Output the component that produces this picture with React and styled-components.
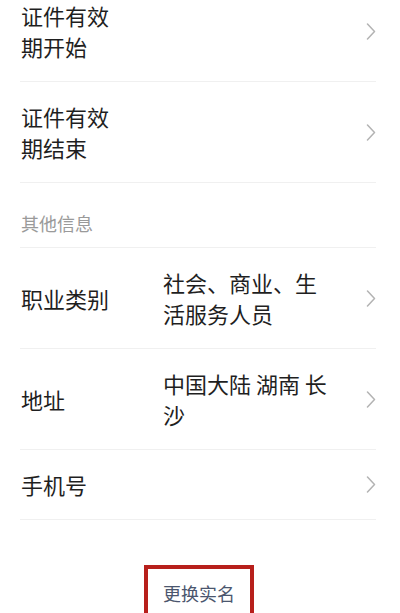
import React from "react";
import styled, { createGlobalStyle } from "styled-components";

const GlobalStyle = createGlobalStyle`
  html, body {
    margin: 0;
    padding: 0;
    background: #ffffff;
    overflow: hidden;
  }
  body {
    font-family: "Noto Sans CJK SC", "Noto Sans", sans-serif;
    color: #1f1f1f;
  }
`;

const Page = styled.div`
  width: 400px;
  height: 613px;
  overflow: hidden;
  background: #ffffff;
`;

const List = styled.div`
  margin-top: -19px;
  padding: 0 24px 0 20px;
`;

const Row = styled.div`
  display: flex;
  align-items: center;
  padding: ${(p) => (p.$single ? "19px" : "19px")} 0;
  border-bottom: 1.5px solid #f0f0f0;
  font-size: 22px;
  line-height: 31px;
`;

const Label = styled.div`
  flex: 0 0 ${(p) => (p.$narrow ? "88px" : "142px")};
  padding-left: 1px;
  color: #1f1f1f;
`;

const Value = styled.div`
  flex: 0 0 170px;
  color: #1f1f1f;
`;

const Spacer = styled.div`
  flex: 1;
`;

const Section = styled.div`
  padding: 29px 0 13px 1px;
  font-size: 18px;
  line-height: 22px;
  color: #9a9a9a;
  border-bottom: 1.5px solid #f0f0f0;
`;

const ButtonArea = styled.div`
  display: flex;
  justify-content: center;
  padding-top: 45px;
  padding-right: 2px;
`;

const ChangeButton = styled.button`
  width: 110px;
  height: 62px;
  padding: 0 0 6px;
  background: #ffffff;
  border: 4px solid #b71f1b;
  font-family: "Noto Sans CJK SC", "Noto Sans", sans-serif;
  font-size: 18px;
  color: #4b566e;
  cursor: pointer;
`;

function Chevron() {
  return (
    <svg width="10" height="17" viewBox="0 0 10 17" style={{ flex: "none", marginRight: 0 }}>
      <polyline
        points="1.5,1 8.5,8.5 1.5,16"
        fill="none"
        stroke="#b3b3b3"
        strokeWidth="1.5"
        strokeLinecap="round"
        strokeLinejoin="round"
      />
    </svg>
  );
}

export default function App() {
  return (
    <Page>
      <GlobalStyle />
      <List>
        <Row>
          <Label $narrow>证件有效期开始</Label>
          <Spacer />
          <Chevron />
        </Row>
        <Row>
          <Label $narrow>证件有效期结束</Label>
          <Spacer />
          <Chevron />
        </Row>
        <Section>其他信息</Section>
        <Row>
          <Label>职业类别</Label>
          <Value>社会、商业、生活服务人员</Value>
          <Spacer />
          <Chevron />
        </Row>
        <Row>
          <Label>地址</Label>
          <Value>中国大陆 湖南 长沙</Value>
          <Spacer />
          <Chevron />
        </Row>
        <Row $single>
          <Label>手机号</Label>
          <Spacer />
          <Chevron />
        </Row>
      </List>
      <ButtonArea>
        <ChangeButton>更换实名</ChangeButton>
      </ButtonArea>
    </Page>
  );
}
